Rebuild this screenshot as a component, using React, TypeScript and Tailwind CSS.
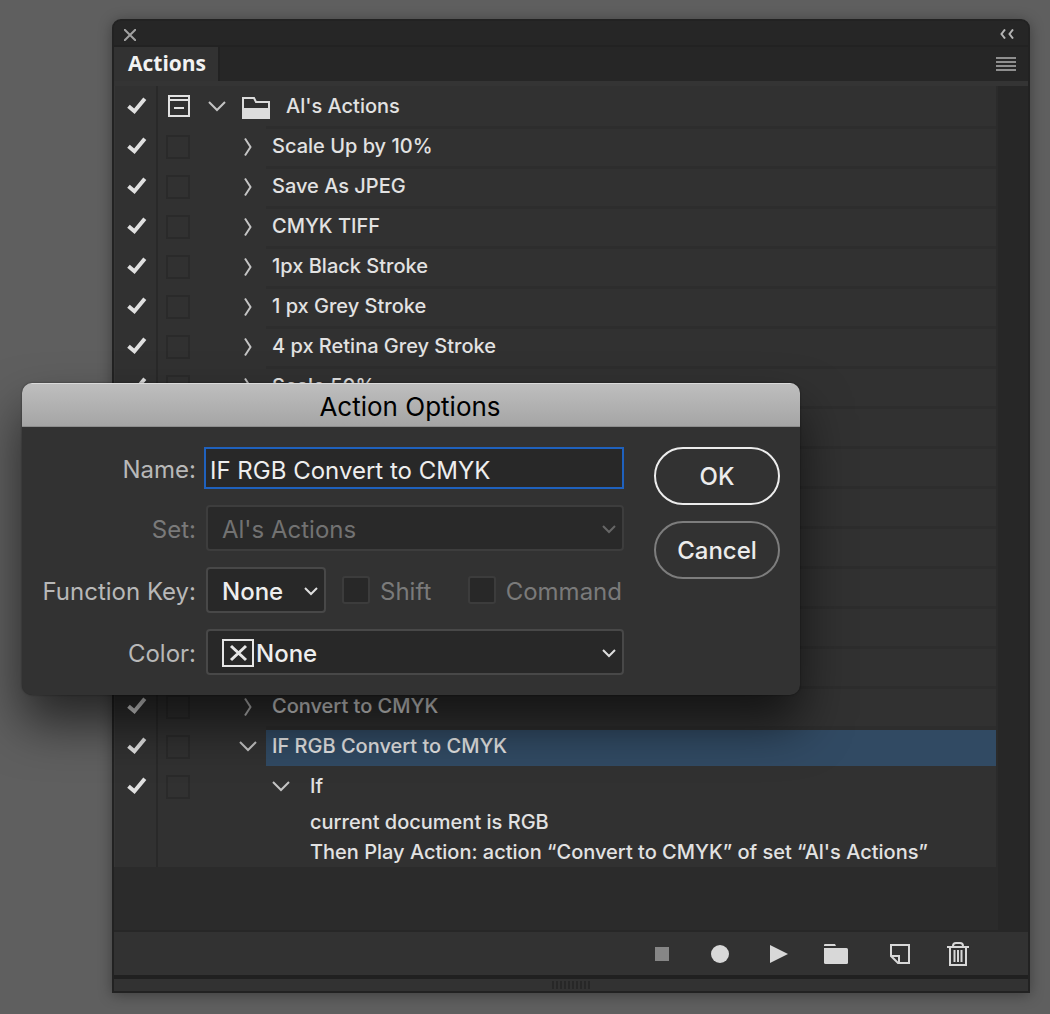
import { useState, type ReactNode } from "react";

type ActionItem = { name: string };

const actionsBefore: ActionItem[] = [
  { name: "Scale Up by 10%" },
  { name: "Save As JPEG" },
  { name: "CMYK TIFF" },
  { name: "1px Black Stroke" },
  { name: "1 px Grey Stroke" },
  { name: "4 px Retina Grey Stroke" },
  { name: "Scale 50%" },
  { name: "" },
  { name: "" },
  { name: "" },
  { name: "" },
  { name: "" },
  { name: "" },
  { name: "" },
  { name: "Convert to CMYK" },
];

function EnabledCheck() {
  const [on, setOn] = useState(true);
  return (
    <label className="relative flex w-[42px] shrink-0 items-center justify-center border-l border-[#363636]">
      <input
        type="checkbox"
        aria-label="Enable action"
        checked={on}
        onChange={() => setOn(!on)}
        className="absolute size-5 appearance-none"
      />
      {on && (
        <svg width="20" height="18" viewBox="0 0 20 18" fill="none" className="ml-0.5">
          <path d="M1.500 9.2 7.400 14.2 17.800 1.8" stroke="#e0e0e0" strokeWidth="4" />
        </svg>
      )}
    </label>
  );
}

function ChevronDown() {
  return (
    <svg width="18" height="12" viewBox="0 0 18 12" fill="none">
      <path d="M1 2 9 10 17 2" stroke="#c4c4c4" strokeWidth="2" />
    </svg>
  );
}

function ChevronRight() {
  return (
    <svg width="12" height="20" viewBox="0 0 12 20" fill="none" className="mt-0.5">
      <path d="M3 1.5 8.500 10 3 18.5" stroke="#c4c4c4" strokeWidth="2" />
    </svg>
  );
}

function DialogToggle() {
  return (
    <button aria-label="Toggle dialog" className="flex w-10 shrink-0 items-center justify-center">
      <span className="mt-0.5 size-6 border-2 border-[#2a2a2a]" />
    </button>
  );
}

function RowStart({ children }: { children: ReactNode }) {
  return (
    <>
      <EnabledCheck />
      <span className="w-0.5 shrink-0 bg-[#292929]" />
      {children}
    </>
  );
}

function ActionRow({ name, selected, open }: { name: string; selected?: boolean; open?: boolean }) {
  return (
    <li className="flex h-10">
      <RowStart>
        <DialogToggle />
      </RowStart>
      <button aria-label="Expand" className="ml-8 flex w-9 shrink-0 items-center justify-center">
        {open ? <ChevronDown /> : <ChevronRight />}
      </button>
      <span
        className={
          selected
            ? "flex flex-1 items-center border-t-4 border-[#2d2d2d] bg-[#314a63] pb-1 pl-1.5"
            : "flex flex-1 items-center border-t-3 border-[#2d2d2d] pb-[3px] pl-1.5"
        }
      >
        {name}
      </span>
    </li>
  );
}

function Toolbar() {
  return (
    <div className="flex h-[45px] items-stretch justify-end border-t-2 border-[#272727] bg-[#323232] pr-[47px]">
      <button aria-label="Stop" className="flex w-[58px] items-center justify-center">
        <span className="size-3.5 bg-[#868686]" />
      </button>
      <button aria-label="Record" className="flex w-[58px] items-center justify-center">
        <span className="size-[18px] rounded-full bg-[#d8d8d8]" />
      </button>
      <button aria-label="Play" className="flex w-[58px] items-center justify-center">
        <svg width="20" height="18" viewBox="0 0 20 18">
          <path d="M2 0 20 9 2 18Z" fill="#d8d8d8" />
        </svg>
      </button>
      <button aria-label="New set" className="flex w-[58px] items-center justify-center">
        <svg width="24" height="20" viewBox="0 0 24 20" fill="#d8d8d8">
          <path d="M0 2V1Q0 0 1 0H11L12 2Z" />
          <path d="M0 4H22.5Q24 4 24 5.5V18.5Q24 20 22.5 20H1.5Q0 20 0 18.5Z" />
        </svg>
      </button>
      <button aria-label="New action" className="flex w-[70px] items-center justify-center">
        <svg width="20" height="20" viewBox="0 0 20 20" fill="none" stroke="#d8d8d8" strokeWidth="2">
          <path d="M1 12V1H19V19H8L1 12H9V19" />
        </svg>
      </button>
      <button aria-label="Delete" className="flex w-[46px] items-center justify-center">
        <svg width="22" height="24" viewBox="0 0 22 24" fill="none" stroke="#d8d8d8" strokeWidth="2">
          <path d="M0 5H22M6 5V4Q6 1 9 1H13Q16 1 16 4V5M3 5V23H19V5" />
          <path d="M7.5 8V20M11 8V20M14.500 8V20" />
        </svg>
      </button>
    </div>
  );
}

function ActionsPanel() {
  return (
    <section className="flex flex-1 flex-col overflow-hidden rounded-t-[9px] border-2 border-[#222222] bg-[#2b2b2b] text-[20px] font-medium text-[#e2e2e2] shadow-[0_2px_14px_rgba(0,0,0,0.35)]">
      <header className="flex h-[26px] items-center justify-between border-b-2 border-[#222222] bg-[#262626] pr-3.5 pl-2.5 pt-1">
        <button aria-label="Close panel">
          <svg width="12" height="12" viewBox="0 0 12 12" stroke="#a2a2a2" strokeWidth="2">
            <path d="M0 0 12 12M12 0 0 12" />
          </svg>
        </button>
        <button aria-label="Collapse panel" className="pb-0.5">
          <svg width="14" height="10" viewBox="0 0 14 10" fill="none" stroke="#b5b5b5" strokeWidth="2">
            <path d="M5 0.500 1.500 5 5 9.500M13 0.500 9.500 5 13 9.500" />
          </svg>
        </button>
      </header>
      <div className="flex h-[34px] justify-between bg-[#262626]">
        <h1 className="flex items-center border-r-2 border-[#222222] bg-[#323232] pr-3 pl-3.5 font-['Open_Sans',sans-serif] text-[21px] font-bold text-[#f2f2f2]">
          Actions
        </h1>
        <button aria-label="Panel menu" className="mr-3 flex flex-col justify-center gap-0.5">
          <span className="h-0.5 w-5 bg-[#8f8f8f]" />
          <span className="h-0.5 w-5 bg-[#8f8f8f]" />
          <span className="h-0.5 w-5 bg-[#8f8f8f]" />
          <span className="h-0.5 w-5 bg-[#8f8f8f]" />
        </button>
      </div>
      <div className="h-[5px] bg-[#343434]" />
      <div className="flex flex-1">
        <ul className="flex-1 self-start bg-[#313131]">
          <li className="flex h-10">
            <RowStart>
              <button aria-label="Toggle set dialogs" className="flex w-10 shrink-0 items-center justify-center">
                <svg width="22" height="22" viewBox="0 0 22 22" fill="none" stroke="#e2e2e2" strokeWidth="2" className="ml-0.5">
                  <path d="M1 1H21V21H1ZM1 5H21M6 13H16" />
                </svg>
              </button>
            </RowStart>
            <button aria-label="Collapse set" className="flex w-[38px] shrink-0 items-center justify-center">
              <ChevronDown />
            </button>
            <span className="flex flex-1 items-center gap-4 pl-1.5">
              <svg width="28" height="22" viewBox="0 0 28 22" fill="none" className="mt-1 shrink-0">
                <path d="M1 21V1H12L14 5H27V21Z" stroke="#dcdcdc" strokeWidth="2" />
                <path d="M1 11H27V21H1Z" fill="#dcdcdc" />
              </svg>
              Al's Actions
            </span>
          </li>
          {actionsBefore.map((action, i) => (
            <ActionRow key={i} name={action.name} />
          ))}
          <ActionRow name="IF RGB Convert to CMYK" selected open />
          <li className="flex">
            <div className="flex h-10">
              <RowStart>
                <DialogToggle />
              </RowStart>
            </div>
            <button aria-label="Collapse step" className="ml-16 flex h-10 w-[38px] shrink-0 items-center justify-center">
              <ChevronDown />
            </button>
            <span className="flex h-10 items-center pl-2.5">If</span>
          </li>
          <li className="flex">
            <span className="w-[42px] shrink-0 border-l border-[#363636]" />
            <span className="w-0.5 shrink-0 bg-[#292929]" />
            <p className="pt-px pl-[152px] leading-[30px]">
              current document is RGB
              <br />
              Then Play Action: action “Convert to CMYK” of set “Al's Actions”
            </p>
          </li>
        </ul>
        <div className="w-8 border-l-2 border-[#2b2b2b] bg-[#272727]" />
      </div>
      <Toolbar />
      <footer className="flex h-4 items-center justify-center gap-0.5 border-t-4 border-[#202020] bg-[#323232]">
        {Array.from({ length: 10 }, (_, i) => (
          <span key={i} className="h-2 w-0.5 bg-[#272727]" />
        ))}
      </footer>
    </section>
  );
}

function SelectBox({
  id,
  value,
  disabled,
  small,
  icon,
}: {
  id: string;
  value: string;
  disabled?: boolean;
  small?: boolean;
  icon?: ReactNode;
}) {
  return (
    <div className={small ? "relative w-[120px]" : "relative ml-0.5"}>
      <select
        id={id}
        disabled={disabled}
        className={
          disabled
            ? "h-[46px] w-full appearance-none rounded-[4px] border-2 border-[#3d3d3d] bg-[#292929] pt-1 pl-3.5 font-normal text-[#727272] opacity-100"
            : icon
              ? "h-[46px] w-full appearance-none rounded-[4px] border-2 border-[#484848] bg-[#282828] pt-1 pl-12 text-[#eeeeee]"
              : "h-[46px] w-full appearance-none rounded-[4px] border-2 border-[#484848] bg-[#282828] pt-1 pl-3.5 text-[#eeeeee]"
        }
      >
        <option>{value}</option>
      </select>
      {icon}
      <svg
        width="14"
        height="9"
        viewBox="0 0 14 9"
        fill="none"
        stroke={disabled ? "#666666" : "#dedede"}
        strokeWidth="2"
        className="pointer-events-none absolute top-5 right-2"
      >
        <path d="M1 1 7 7 13 1" />
      </svg>
    </div>
  );
}

function ActionOptionsDialog() {
  const [name, setName] = useState("IF RGB Convert to CMYK");
  return (
    <div
      role="dialog"
      aria-labelledby="dialog-title"
      className="absolute top-[383px] left-[22px] w-[778px] overflow-hidden rounded-[10px] bg-[#323232] text-[24px] font-medium shadow-[0_0_2px_rgba(0,0,0,0.5),0_28px_50px_rgba(0,0,0,0.6)]"
    >
      <h2
        id="dialog-title"
        className="flex h-11 items-center justify-center border-t border-b border-t-[#dadada] border-b-[#8d8d8d] bg-linear-to-b from-[#bebebe] to-[#a5a5a5] pt-0.5 pr-0.5 text-[26px] font-normal text-black"
      >
        Action Options
      </h2>
      <form className="flex justify-between p-5" onSubmit={(e) => e.preventDefault()}>
        <div className="grid grid-cols-[154px_420px] items-center gap-x-2 gap-y-4 text-[#b8b8b8]">
          <label htmlFor="name" className="pt-1 text-right font-normal whitespace-nowrap">
            Name:
          </label>
          <input
            id="name"
            value={name}
            onChange={(e) => setName(e.target.value)}
            className="h-[42px] border-2 border-[#1f61bd] bg-[#282828] px-1 pt-1 font-normal text-[#eeeeee] outline-none"
          />
          <label htmlFor="set" className="pt-1 text-right font-normal text-[#7a7a7a]">
            Set:
          </label>
          <SelectBox id="set" value="Al's Actions" disabled />
          <label htmlFor="fkey" className="flex justify-end pt-1 font-normal whitespace-nowrap">
            Function Key:
          </label>
          <div className="ml-0.5 flex items-center text-[#7a7a7a]">
            <SelectBox id="fkey" value="None" small />
            <label className="ml-4 flex items-center gap-2.5 font-normal">
              <input type="checkbox" disabled className="size-7 appearance-none rounded-[3px] border-2 border-[#3c3c3c] bg-[#282828]" />
              <span className="pt-1">Shift</span>
            </label>
            <label className="mr-0.5 ml-auto flex items-center gap-2.5 font-normal">
              <input type="checkbox" disabled className="size-7 appearance-none rounded-[3px] border-2 border-[#3c3c3c] bg-[#282828]" />
              <span className="pt-1">Command</span>
            </label>
          </div>
          <label htmlFor="color" className="pt-1 text-right font-normal">
            Color:
          </label>
          <SelectBox
            id="color"
            value="None"
            icon={
              <svg
                width="32"
                height="28"
                viewBox="0 0 32 28"
                fill="none"
                stroke="#e6e6e6"
                className="pointer-events-none absolute top-2.5 left-4"
              >
                <path d="M1 1H31V27H1Z" strokeWidth="2" />
                <path d="M9 7 24 21M24 7 9 21" strokeWidth="3" />
              </svg>
            }
          />
        </div>
        <div className="flex w-[126px] flex-col gap-4 text-[#ececec]">
          <button className="h-[58px] rounded-full border-2 border-[#ececec] pt-0.5">OK</button>
          <button className="h-[58px] rounded-full border-2 border-[#7d7d7d] pt-0.5">Cancel</button>
        </div>
      </form>
    </div>
  );
}

export default function App() {
  return (
    <main className="relative flex min-h-screen flex-col bg-[#5f5f5f] pt-[19px] pr-5 pb-[21px] pl-28 font-['Inter',sans-serif]">
      <ActionsPanel />
      <ActionOptionsDialog />
    </main>
  );
}
